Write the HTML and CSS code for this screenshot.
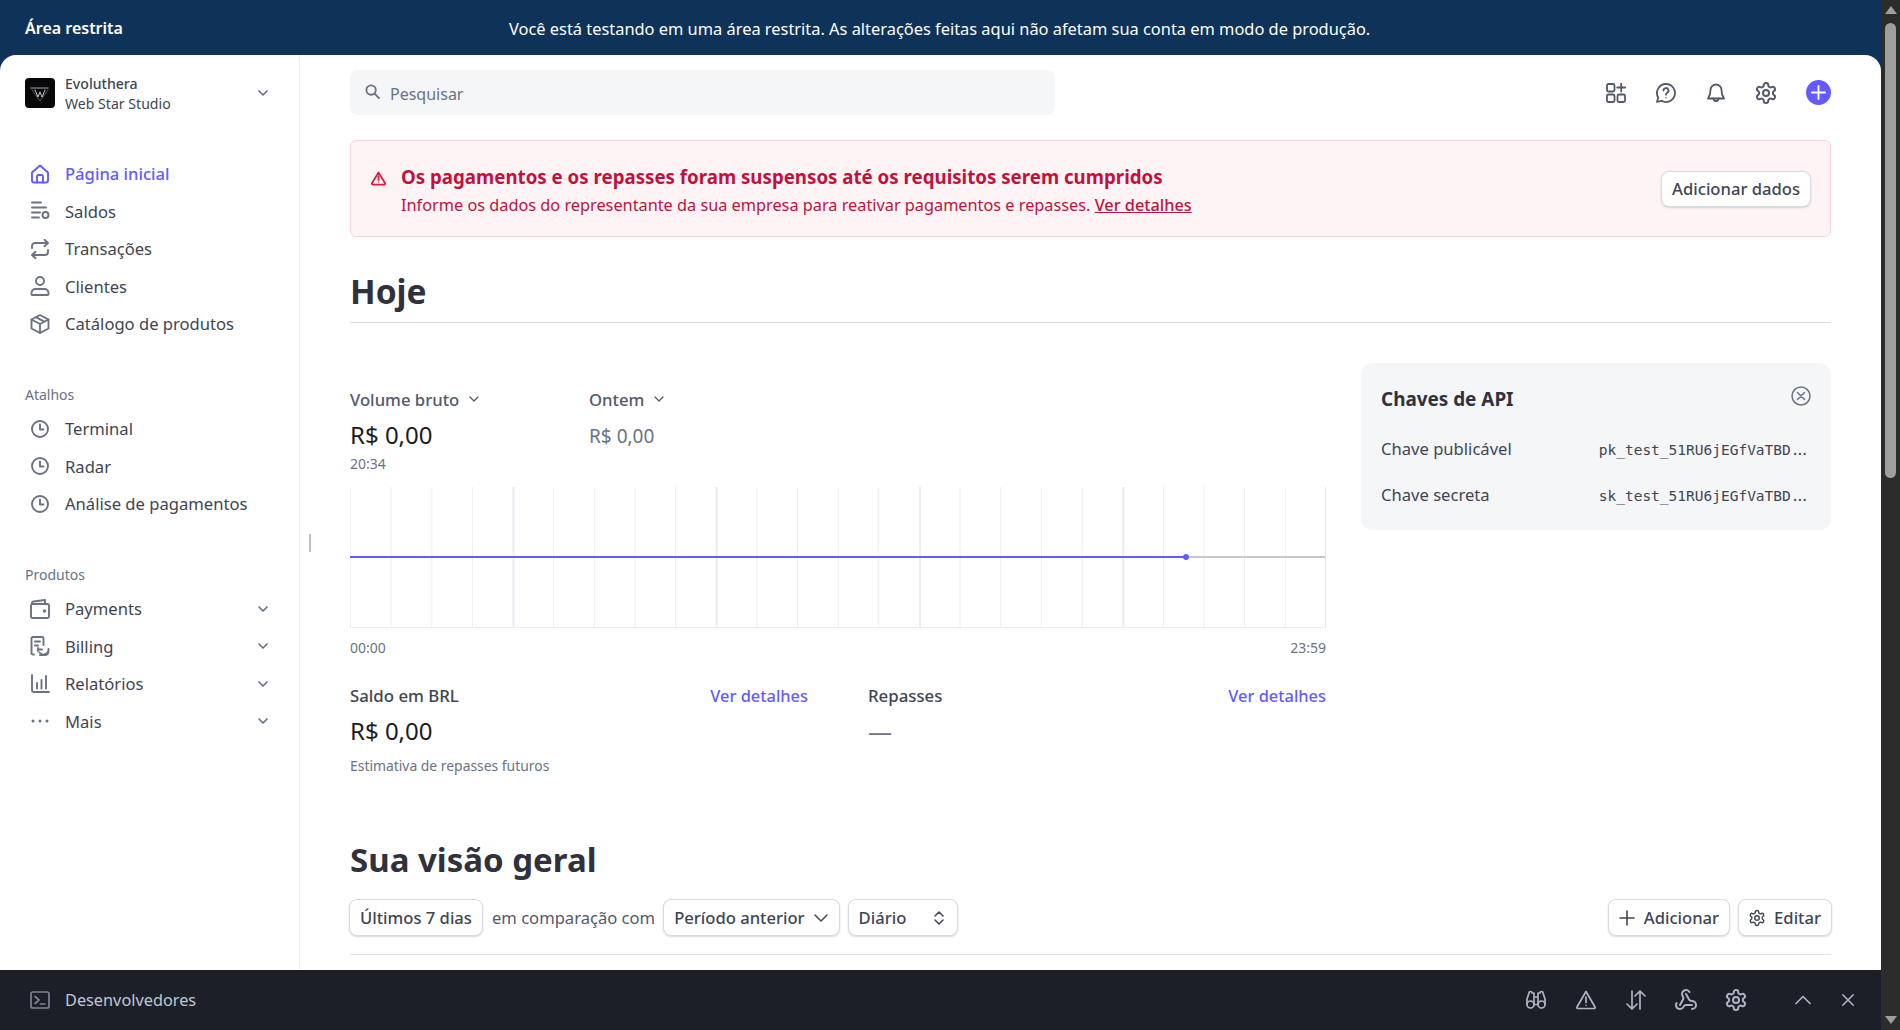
FILE: index.html
```html
<!DOCTYPE html>
<html lang="pt-BR">
<head>
    <meta charset="UTF-8">
    <meta name="viewport" content="width=device-width, initial-scale=1.0">
    <title>Página inicial</title>
    <link rel="stylesheet" href="styles.css">
</head>
<body>
    <svg class="sprites" xmlns="http://www.w3.org/2000/svg">
        <symbol id="gear" viewBox="0 0 24 24">
            <path d="M12.22 2h-.44a2 2 0 0 0-2 2v.18a2 2 0 0 1-1 1.73l-.43.25a2 2 0 0 1-2 0l-.15-.08a2 2 0 0 0-2.73.73l-.22.38a2 2 0 0 0 .73 2.73l.15.1a2 2 0 0 1 1 1.72v.51a2 2 0 0 1-1 1.74l-.15.09a2 2 0 0 0-.73 2.73l.22.38a2 2 0 0 0 2.73.73l.15-.08a2 2 0 0 1 2 0l.43.25a2 2 0 0 1 1 1.73V20a2 2 0 0 0 2 2h.44a2 2 0 0 0 2-2v-.18a2 2 0 0 1 1-1.73l.43-.25a2 2 0 0 1 2 0l.15.08a2 2 0 0 0 2.73-.73l.22-.39a2 2 0 0 0-.73-2.73l-.15-.08a2 2 0 0 1-1-1.74v-.5a2 2 0 0 1 1-1.74l.15-.09a2 2 0 0 0 .73-2.73l-.22-.38a2 2 0 0 0-2.73-.73l-.15.08a2 2 0 0 1-2 0l-.43-.25a2 2 0 0 1-1-1.73V4a2 2 0 0 0-2-2z"/>
            <circle cx="12" cy="12" r="3"/>
        </symbol>
        <symbol id="clock" viewBox="0 0 20 20">
            <circle cx="10" cy="10" r="8"/>
            <path d="M10 5.5v5h3.5"/>
        </symbol>
        <symbol id="chev" viewBox="0 0 12 12">
            <path d="M2 4l4 4 4-4"/>
        </symbol>
    </svg>

    <div class="page">
        <div class="window">
            <header class="topbar">
                <span class="topbar-title">Área restrita</span>
                <span class="topbar-msg">Você está testando em uma área restrita. As alterações feitas aqui não afetam sua conta em modo de produção.</span>
            </header>

            <div class="panel">
                <aside class="sidebar">
                    <div class="org">
                        <svg class="org-logo" viewBox="0 0 30 30">
                            <rect width="30" height="30" rx="4" fill="#08080a"/>
                            <path d="M6 10h18" stroke="#77777c" stroke-width="1.5" stroke-dasharray="1 1"/>
                            <path d="M7 12l8 11 8-11" fill="none" stroke="#67676c" stroke-width="1" stroke-dasharray="1 1"/>
                            <path d="M10 12l3 7 2-5 2 5 3-7" fill="none" stroke="#d0d0d4" stroke-width="1" stroke-dasharray="1 .7"/>
                        </svg>
                        <div class="org-names">
                            <div class="org-name">Evoluthera</div>
                            <div class="org-sub">Web Star Studio</div>
                        </div>
                        <svg class="chev"><use href="#chev"/></svg>
                    </div>

                    <nav class="nav nav-main">
                        <a class="nav-item active">
                            <svg class="ico" viewBox="0 0 20 20"><path d="M2 8.5 10 1.5l8 7v8a2 2 0 0 1-2 2H4a2 2 0 0 1-2-2z"/><path d="M7 18.5v-6a1.5 1.5 0 0 1 1.5-1.5h3a1.5 1.5 0 0 1 1.5 1.5v6"/></svg>
                            Página inicial
                        </a>
                        <a class="nav-item">
                            <svg class="ico" viewBox="0 0 20 20"><path d="M2 1.5h9M2 6.5h14M2 11.5h8M2 16.5h7"/><circle cx="15.5" cy="14" r="3"/></svg>
                            Saldos
                        </a>
                        <a class="nav-item">
                            <svg class="ico" viewBox="0 0 20 20"><path d="M2 9V7a3 3 0 0 1 3-3h13M14.500 .8 18 4l-3.500 3.200"/><path d="M18 11v2a3 3 0 0 1-3 3H2M5.500 12.800 2 16l3.500 3.200"/></svg>
                            Transações
                        </a>
                        <a class="nav-item">
                            <svg class="ico" viewBox="0 0 20 20"><circle cx="10" cy="5" r="4"/><path d="M1.500 18v-1a4 4 0 0 1 4-4h9a4 4 0 0 1 4 4v1a1 1 0 0 1-1 1h-15a1 1 0 0 1-1-1z"/></svg>
                            Clientes
                        </a>
                        <a class="nav-item">
                            <svg class="ico" viewBox="0 0 20 20"><path d="M10 1l8.500 4.500v9L10 19l-8.500-4.500v-9z"/><path d="M1.500 5.500 10 10l8.500-4.500M10 10v9M5.800 3.200l8.500 4.500"/></svg>
                            Catálogo de produtos
                        </a>
                    </nav>

                    <div class="nav-label">Atalhos</div>
                    <nav class="nav">
                        <a class="nav-item"><svg class="ico"><use href="#clock"/></svg>Terminal</a>
                        <a class="nav-item"><svg class="ico"><use href="#clock"/></svg>Radar</a>
                        <a class="nav-item"><svg class="ico"><use href="#clock"/></svg>Análise de pagamentos</a>
                    </nav>

                    <div class="nav-label">Produtos</div>
                    <nav class="nav">
                        <a class="nav-item">
                            <svg class="ico" viewBox="0 0 20 20"><rect x="1" y="5" width="18" height="14" rx="1.500"/><path d="M2 5V4a1.500 1.500 0 0 1 1.300-1.500L15 1v4"/><circle cx="14.500" cy="12" r=".8"/></svg>
                            Payments
                            <svg class="chev"><use href="#chev"/></svg>
                        </a>
                        <a class="nav-item">
                            <svg class="ico" viewBox="0 0 20 20"><path d="M4 18.500H3a1.500 1.500 0 0 1-1.500-1.500V2.500A1.500 1.500 0 0 1 3 1h9a1.500 1.500 0 0 1 1.500 1.500V9M5 5.500h5M5 9.500h3"/><path d="M18.500 13a5 5 0 0 1-9 3.500M8 13.500h4M8 12v3M10 19h5a3.500 3.500 0 0 0 3.500-3.500"/></svg>
                            Billing
                            <svg class="chev"><use href="#chev"/></svg>
                        </a>
                        <a class="nav-item">
                            <svg class="ico" viewBox="0 0 20 20"><path d="M2 1v15.500a1.500 1.500 0 0 0 1.500 1.500H19M7 9v5.500M11.500 6v8.500M16 2v12.500"/></svg>
                            Relatórios
                            <svg class="chev"><use href="#chev"/></svg>
                        </a>
                        <a class="nav-item">
                            <svg class="ico" viewBox="0 0 20 20"><circle class="dot" cx="3" cy="10" r="1.500"/><circle class="dot" cx="10" cy="10" r="1.500"/><circle class="dot" cx="17" cy="10" r="1.500"/></svg>
                            Mais
                            <svg class="chev"><use href="#chev"/></svg>
                        </a>
                    </nav>
                </aside>

                <div class="resize-handle"></div>

                <main class="main">
                    <div class="toolbar">
                        <div class="search">
                            <svg class="search-ico" viewBox="0 0 16 16"><circle cx="6.500" cy="6.500" r="5"/><path d="M10.500 10.500 15 15"/></svg>
                            Pesquisar
                        </div>
                        <div class="tools">
                            <svg class="tool" viewBox="0 0 20 20"><rect x="1" y="1" width="7.500" height="7.500" rx="1.500"/><rect x="1" y="11.500" width="7.500" height="7.500" rx="1.500"/><rect x="11.500" y="11.500" width="7.500" height="7.500" rx="1.500"/><path d="M15.200 .5v8M11.200 4.500h8"/></svg>
                            <svg class="tool" viewBox="0 0 20 20"><path d="M10 1a9 9 0 1 1-4.500 16.800L1 19l1.200-4.500A9 9 0 0 1 10 1z"/><path d="M7.500 7.500a2.500 2.500 0 1 1 3.700 2.200c-.8.500-1.200 1-1.200 2"/><circle class="dot" cx="10" cy="14.500" r=".7"/></svg>
                            <svg class="tool" viewBox="0 0 20 20"><path d="M4.500 7a5.500 5.500 0 0 1 11 0c0 5 1 6.500 2.500 8.500H2C3.500 13.500 4.500 12 4.500 7z"/><path d="M7.500 15.500a2.500 2.500 0 0 0 5 0"/></svg>
                            <svg class="tool tool-24"><use href="#gear"/></svg>
                            <span class="plus-btn">
                                <svg viewBox="0 0 16 16"><path d="M8 1v14M1 8h14"/></svg>
                            </span>
                        </div>
                    </div>

                    <section class="banner">
                        <svg class="banner-ico" viewBox="0 0 16 16"><path d="M8 1.500 15 13a1 1 0 0 1-.9 1.500H1.900A1 1 0 0 1 1 13z"/><path d="M8 5.500v4"/><circle class="dot" cx="8" cy="11.800" r=".7"/></svg>
                        <div class="banner-text">
                            <div class="banner-title">Os pagamentos e os repasses foram suspensos até os requisitos serem cumpridos</div>
                            <div class="banner-body">Informe os dados do representante da sua empresa para reativar pagamentos e repasses. <a class="banner-link">Ver detalhes</a></div>
                        </div>
                        <button class="btn btn-banner">Adicionar dados</button>
                    </section>

                    <h1 class="page-title">Hoje</h1>

                    <section class="today">
                        <div class="today-left">
                            <div class="metrics">
                                <div class="metric">
                                    <div class="metric-head">Volume bruto <svg class="chev"><use href="#chev"/></svg></div>
                                    <div class="metric-value">R$ 0,00</div>
                                    <div class="metric-time">20:34</div>
                                </div>
                                <div class="metric">
                                    <div class="metric-head">Ontem <svg class="chev"><use href="#chev"/></svg></div>
                                    <div class="metric-value muted">R$ 0,00</div>
                                </div>
                            </div>
                            <div class="chart">
                                <div class="chart-line"></div>
                                <div class="chart-dot"></div>
                            </div>
                            <div class="chart-axis"><span>00:00</span><span>23:59</span></div>
                            <div class="balances">
                                <div>
                                    <div class="balance-head"><span>Saldo em BRL</span><a class="link">Ver detalhes</a></div>
                                    <div class="metric-value">R$ 0,00</div>
                                    <div class="balance-note">Estimativa de repasses futuros</div>
                                </div>
                                <div>
                                    <div class="balance-head"><span>Repasses</span><a class="link">Ver detalhes</a></div>
                                    <div class="balance-empty">—</div>
                                </div>
                            </div>
                        </div>

                        <aside class="keys">
                            <div class="keys-head">
                                <span>Chaves de API</span>
                                <svg class="keys-close" viewBox="0 0 20 20"><circle cx="10" cy="10" r="9"/><path d="M6.500 6.500l7 7M13.500 6.500l-7 7"/></svg>
                            </div>
                            <div class="key-row"><span>Chave publicável</span><code>pk_test_51RU6jEGfVaTBD<span class="key-dots">...</span></code></div>
                            <div class="key-row"><span>Chave secreta</span><code>sk_test_51RU6jEGfVaTBD<span class="key-dots">...</span></code></div>
                        </aside>
                    </section>

                    <h2 class="section-title">Sua visão geral</h2>
                    <div class="filters">
                        <button class="btn">Últimos 7 dias</button>
                        <span class="filters-text">em comparação com</span>
                        <button class="btn btn-select">Período anterior
                            <svg class="btn-chev" viewBox="0 0 16 16"><path d="M2 5l6 6 6-6"/></svg>
                        </button>
                        <button class="btn btn-select btn-daily">Diário
                            <svg class="btn-chev" viewBox="0 0 16 16"><path d="M4 6l4-4 4 4M4 10l4 4 4-4"/></svg>
                        </button>
                        <div class="filters-right">
                            <button class="btn"><svg class="btn-ico" viewBox="0 0 16 16"><path d="M8 1v14M1 8h14"/></svg>Adicionar</button>
                            <button class="btn"><svg class="btn-ico btn-gear"><use href="#gear"/></svg>Editar</button>
                        </div>
                    </div>
                    <div class="filters-rule"></div>
                </main>
            </div>

            <footer class="devbar">
                <svg class="dev-ico" viewBox="0 0 20 20"><rect x="1" y="2" width="18" height="16" rx="2"/><path d="M5 6.500 9 10l-4 3.500M10.500 14H15"/></svg>
                <span class="dev-label">Desenvolvedores</span>
                <div class="dev-tools">
                    <svg class="dev-tool" viewBox="0 0 20 20"><circle cx="4.500" cy="14.500" r="3.500"/><circle cx="15.500" cy="14.500" r="3.500"/><path d="M8 14.500h4M1 14V9l2-6a1.500 1.500 0 0 1 3 0h2v11.500M19 14V9l-2-6a1.500 1.500 0 0 0-3 0h-2v11.500M8 7h4"/></svg>
                    <svg class="dev-tool" viewBox="0 0 20 20"><path d="M10 1.500l9 15.500a1 1 0 0 1-.9 1.500H1.900A1 1 0 0 1 1 17z"/><path d="M10 7v5.500"/><circle class="dot" cx="10" cy="15.200" r=".8"/></svg>
                    <svg class="dev-tool" viewBox="0 0 20 20"><path d="M6 1v18M1 14l5 5 5-5M14 19V1M9 6l5-5 5 5"/></svg>
                    <svg class="dev-tool tool-24" viewBox="0 0 24 24"><path d="M18 16.980h-5.990c-1.100 0-1.950.940-2.480 1.900A4 4 0 0 1 2 17c.010-.700.200-1.400.570-2"/><path d="m6 17 3.130-5.780c.530-.970.100-2.180-.500-3.100a4 4 0 1 1 6.890-4.060"/><path d="m12 6 3.130 5.730C15.660 12.700 16.900 13 18 13a4 4 0 0 1 0 8"/></svg>
                    <svg class="dev-tool tool-24"><use href="#gear"/></svg>
                    <svg class="dev-tool dev-up" viewBox="0 0 16 16"><path d="M1 11.500l7-7 7 7"/></svg>
                    <svg class="dev-tool dev-close" viewBox="0 0 16 16"><path d="M2 2l12 12M14 2 2 14"/></svg>
                </div>
            </footer>
        </div>

        <div class="scrollbar">
            <span class="scroll-up"></span>
            <div class="scroll-track"><div class="scroll-thumb"></div></div>
            <span class="scroll-down"></span>
        </div>
    </div>
</body>
</html>
```

FILE: styles.css
```css
* {
    box-sizing: border-box;
}
html, body {
    margin: 0;
    height: 100%;
    overflow: hidden;
}
body {
    font-family: "Noto Sans", "Open Sans", sans-serif;
    font-size: 16.400px;
    color: #414552;
    background: #0f3358;
}
a {
    text-decoration: none;
}
.sprites {
    display: none;
}
svg {
    fill: none;
    stroke: currentColor;
    stroke-linecap: round;
    stroke-linejoin: round;
}
.dot {
    fill: currentColor;
    stroke: none;
}
.page {
    display: flex;
    height: 100vh;
}
.window {
    flex: 1;
    min-width: 0;
    display: flex;
    flex-direction: column;
}

/* top strip */
.topbar {
    height: 55px;
    flex-shrink: 0;
    display: flex;
    align-items: center;
    padding: 1px 25px 0;
    background: #0f3358;
    color: #fff;
}
.topbar-title {
    width: 484px;
    font-size: 16px;
    font-weight: 600;
}
.topbar-msg {
    white-space: nowrap;
}

.panel {
    flex: 1;
    min-height: 0;
    display: flex;
    overflow: hidden;
    background: #fff;
    border-radius: 16px 16px 0 0;
}

/* sidebar */
.sidebar {
    width: 300px;
    flex-shrink: 0;
    padding: 23px 30px 0 25px;
    border-right: 1px solid #ebeef1;
}
.org {
    display: flex;
    align-items: center;
    height: 30px;
    margin-bottom: 47px;
}
.org-logo {
    width: 30px;
    height: 30px;
    stroke: none;
    margin-right: 10px;
}
.org-names {
    flex: 1;
    padding-top: 2px;
    font-size: 14.100px;
    line-height: 20px;
}
.org-name {
    font-weight: 500;
}
.chev {
    width: 12px;
    height: 12px;
    stroke-width: 1.7;
    color: #687385;
}
.nav-label {
    height: 20px;
    margin-top: 42px;
    margin-bottom: 5px;
    font-size: 14px;
    line-height: 20px;
    color: #687385;
}
.nav-item {
    display: flex;
    align-items: center;
    height: 37.600px;
    font-size: 16.600px;
    color: #414552;
}
.nav-main .nav-item {
    height: 37.500px;
}
.nav-main + .nav-label {
    margin-top: 42.500px;
}
.nav-item .chev {
    margin-left: auto;
}
.nav-item.active {
    font-weight: 500;
    color: #635bff;
}
.ico {
    width: 20px;
    height: 20px;
    margin: 0 15px 0 5px;
    stroke-width: 1.900;
    color: #6a7383;
}
.active .ico {
    color: #635bff;
}
.resize-handle {
    width: 2px;
    height: 18px;
    margin: 479px 0 0 9px;
    background: #b9c1d0;
    flex-shrink: 0;
}

/* main column */
.main {
    flex: 1;
    min-width: 0;
    padding: 15px 50px 0 39px;
}
.toolbar {
    display: flex;
    justify-content: space-between;
    align-items: center;
    height: 45px;
}
.search {
    width: 705px;
    height: 45px;
    display: flex;
    align-items: center;
    gap: 10px;
    padding: 2px 15px 0;
    border-radius: 8px;
    background: #f5f6f8;
    font-size: 16px;
    color: #6a7383;
}
.search-ico {
    width: 15px;
    height: 15px;
    stroke-width: 2;
    margin-top: -4px;
}
.tools {
    display: flex;
    align-items: center;
    gap: 30px;
    color: #545969;
}
.tool {
    width: 20px;
    height: 20px;
    stroke-width: 1.800;
}
.tool-24 {
    width: 24px;
    height: 24px;
    margin: -2px;
    stroke-width: 2;
}
.plus-btn {
    width: 25px;
    height: 25px;
    display: flex;
    align-items: center;
    justify-content: center;
    border-radius: 50%;
    background: #635bff;
    color: #fff;
}
.plus-btn svg {
    width: 15px;
    height: 15px;
    stroke-width: 2;
}

/* alert */
.banner {
    display: flex;
    align-items: center;
    height: 97px;
    margin-top: 25px;
    padding: 0 19px 0 20px;
    border: 1px solid #fbd3de;
    border-radius: 6px;
    background: #fef4f6;
    color: #c0123c;
}
.banner-ico {
    width: 15px;
    height: 15px;
    flex-shrink: 0;
    margin: -20px 15px 0 0;
    stroke-width: 1.900;
    color: #df1b41;
}
.banner-text {
    flex: 1;
    padding-top: 4px;
}
.banner-title {
    font-size: 18.700px;
    font-weight: 700;
    line-height: 28px;
}
.banner-body {
    font-size: 16.300px;
    line-height: 28px;
}
.banner-link {
    font-weight: 500;
    text-decoration: underline;
}
.btn {
    display: inline-flex;
    align-items: center;
    height: 37px;
    padding: 0 10px;
    border: 1px solid #d5dbe1;
    border-radius: 8px;
    background: #fff;
    box-shadow: 0 1px 2px rgba(64, 68, 82, 0.2);
    font-family: inherit;
    font-size: 16.600px;
    font-weight: 500;
    color: #414552;
    white-space: nowrap;
}
.btn-banner {
    height: 36px;
}

.page-title {
    margin: 32px 0 0;
    padding-bottom: 9px;
    border-bottom: 1px solid #d8dee4;
    font-size: 33.500px;
    line-height: 44px;
    font-weight: 700;
    color: #30313d;
}

/* today */
.today {
    display: grid;
    grid-template-columns: 976px 470px;
    justify-content: space-between;
    align-items: start;
    margin-top: 40px;
}
.today-left {
    padding-top: 25px;
}
.metrics {
    display: flex;
}
.metric {
    width: 239px;
}
.metric-head {
    display: flex;
    align-items: center;
    gap: 9px;
    height: 22px;
    font-size: 16.700px;
    font-weight: 500;
    color: #545969;
}
.metric-head .chev {
    color: #545969;
    stroke-width: 1.300;
}
.metric-value {
    height: 32px;
    margin-top: 9px;
    font-size: 24px;
    line-height: 32px;
    color: #1a1b25;
}
.metric-value.muted {
    font-size: 19px;
    line-height: 34px;
    color: #6a7383;
}
.metric-time {
    height: 18px;
    margin-top: 4px;
    font-size: 14px;
    line-height: 18px;
    color: #6a7383;
}
.chart {
    position: relative;
    height: 141px;
    margin-top: 14px;
    border-bottom: 1px solid #ebeef1;
    border-right: 1px solid #e3e6ee;
    background-image:
        linear-gradient(to right, #eceef3 1.500px, transparent 1.500px),
        linear-gradient(to right, #eceef3 1px, transparent 1px);
    background-size: 203.250px 100%, 40.650px 100%;
    background-position: 162.600px 0, 0 0;
}
.chart-line {
    position: absolute;
    left: 0;
    right: 0;
    top: 69px;
    height: 2px;
    background: linear-gradient(to right, #635bff 85.900%, #c4c8d0 85.900%);
}
.chart-dot {
    position: absolute;
    left: 833px;
    top: 67px;
    width: 6px;
    height: 6px;
    border-radius: 50%;
    background: #635bff;
}
.chart-axis {
    display: flex;
    justify-content: space-between;
    height: 18px;
    margin-top: 11px;
    font-size: 14px;
    line-height: 18px;
    color: #6a7383;
}
.balances {
    display: grid;
    grid-template-columns: 1fr 1fr;
    gap: 60px;
    margin-top: 28px;
}
.balance-head {
    display: flex;
    justify-content: space-between;
    height: 22px;
    font-size: 16.800px;
    line-height: 22px;
    font-weight: 500;
}
.link {
    font-size: 16.400px;
    color: #635bff;
}
.balances .metric-value {
    margin-top: 8px;
}
.balance-note {
    height: 18px;
    margin-top: 10px;
    font-size: 13.900px;
    line-height: 18px;
    color: #6a7383;
}
.balance-empty {
    height: 32px;
    margin-top: 8px;
    font-size: 24px;
    line-height: 32px;
    color: #6a7383;
}

/* api keys */
.keys {
    height: 167px;
    padding: 24px 20px 0;
    border-radius: 12px;
    background: #f5f6f8;
}
.keys-head {
    display: flex;
    justify-content: space-between;
    height: 24px;
    font-size: 18.900px;
    line-height: 24px;
    font-weight: 700;
    color: #30313d;
}
.keys-close {
    width: 20px;
    height: 20px;
    margin-top: -1px;
    stroke-width: 1.500;
    color: #6a7383;
}
.key-row {
    display: flex;
    justify-content: space-between;
    align-items: center;
    height: 46px;
    font-size: 16.600px;
}
.keys-head + .key-row {
    margin-top: 14px;
}
.key-row code {
    font-family: "DejaVu Sans Mono", monospace;
    font-size: 14.500px;
    padding-top: 4px;
    padding-right: 2px;
}
.key-dots {
    letter-spacing: -4px;
    margin-right: 4px;
}

/* overview */
.section-title {
    height: 48px;
    margin: 61px 0 0;
    font-size: 33px;
    line-height: 48px;
    font-weight: 700;
    color: #30313d;
}
.filters {
    display: flex;
    align-items: center;
    margin-top: 15px;
    margin-left: -1px;
    margin-right: -1px;
}
.filters-text {
    margin: 0 8px 0 9px;
    font-size: 16.600px;
    color: #545969;
}
.btn-select {
    justify-content: space-between;
    gap: 8px;
    margin-right: 8px;
}
.btn-daily {
    width: 110px;
}
.btn-chev {
    width: 16px;
    height: 16px;
    stroke-width: 1.500;
}
.filters-right {
    display: flex;
    gap: 8px;
    margin-left: auto;
}
.btn-ico {
    width: 16px;
    height: 16px;
    margin-right: 9px;
    stroke-width: 1.600;
}
.btn-gear {
    width: 18px;
    height: 18px;
    margin: 0 8px 0 -1px;
    stroke-width: 1.900;
}
.filters-rule {
    margin-top: 18px;
    border-top: 1px solid #dfe2e8;
}

/* developer strip */
.devbar {
    height: 60px;
    flex-shrink: 0;
    display: flex;
    align-items: center;
    padding: 0 26px 0 30px;
    background: #1c1f28;
    color: #c0c8d2;
    position: relative;
    z-index: 1;
}
.dev-ico {
    width: 20px;
    height: 20px;
    margin-right: 15px;
    stroke-width: 1.700;
    color: #7d8594;
}
.dev-label {
    font-size: 16.300px;
}
.dev-tools {
    margin-left: auto;
    display: flex;
    align-items: center;
    gap: 30px;
    color: #aeb5c2;
}
.dev-tool {
    width: 20px;
    height: 20px;
    stroke-width: 1.700;
}
.dev-tool.tool-24 {
    width: 24px;
    height: 24px;
    stroke-width: 2;
}
.dev-up {
    width: 16px;
    height: 16px;
    margin-left: 19px;
}
.dev-close {
    width: 14px;
    height: 14px;
}

/* browser scrollbar */
.scrollbar {
    width: 19px;
    flex-shrink: 0;
    display: flex;
    flex-direction: column;
    background: #2c2c2c;
    padding: 6px 4px;
}
.scroll-up, .scroll-down {
    width: 0;
    height: 0;
    margin: 0 auto;
    border-left: 6px solid transparent;
    border-right: 6px solid transparent;
}
.scroll-up {
    border-bottom: 8px solid #9f9f9f;
}
.scroll-down {
    border-top: 8px solid #9f9f9f;
}
.scroll-track {
    flex: 1;
    padding-top: 9px;
}
.scroll-thumb {
    height: 455px;
    border-radius: 6px;
    background: #9f9f9f;
}
```
